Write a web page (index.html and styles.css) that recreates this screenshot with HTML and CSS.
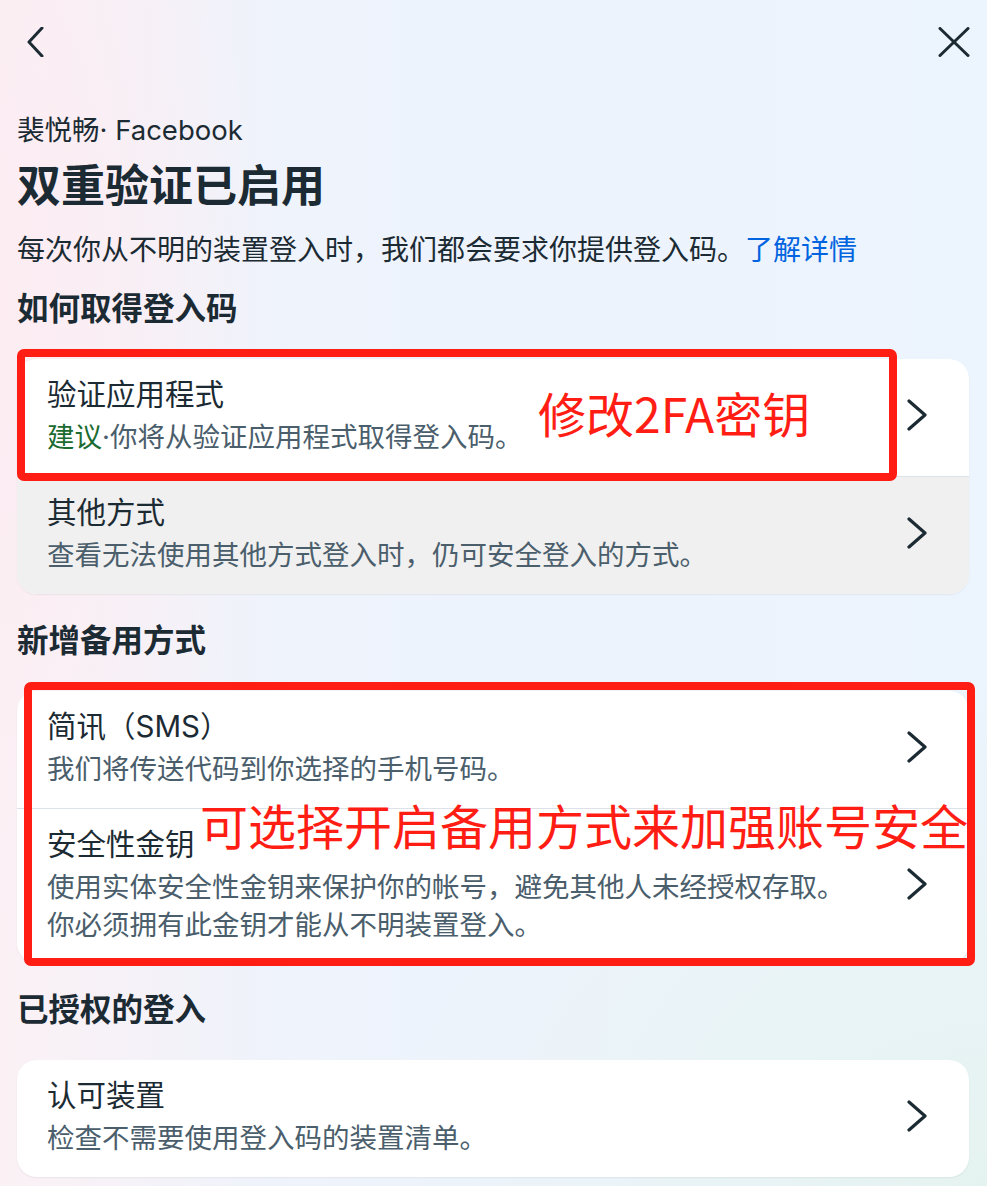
FILE: index.html
```html
<!DOCTYPE html>
<html lang="zh-CN">
<head>
  <meta charset="UTF-8">
  <title>双重验证</title>
  <link rel="stylesheet" href="styles.css">
</head>
<body>
  <div class="page">
    <div class="topbar">
      <svg class="icon-back" width="30" height="30" viewBox="0 0 30 30">
        <polyline points="20,1 7,15 20,29" fill="none" stroke="#1c2b33" stroke-width="3" stroke-linecap="round" stroke-linejoin="round"/>
      </svg>
      <svg class="icon-close" width="32" height="30" viewBox="0 0 32 30">
        <line x1="2" y1="1.5" x2="30" y2="28.5" stroke="#1c2b33" stroke-width="3" stroke-linecap="round"/>
        <line x1="30" y1="1.5" x2="2" y2="28.5" stroke="#1c2b33" stroke-width="3" stroke-linecap="round"/>
      </svg>
    </div>

    <div class="account">裴悦畅· Facebook</div>
    <h1 class="title">双重验证已启用</h1>
    <p class="desc">每次你从不明的装置登入时，我们都会要求你提供登入码。<a href="#">了解详情</a></p>

    <h2 class="section">如何取得登入码</h2>
    <div class="card-wrap">
      <div class="card">
        <div class="row">
          <div class="row-text">
            <div class="row-title">验证应用程式</div>
            <div class="row-sub"><span class="green">建议</span>·你将从验证应用程式取得登入码。</div>
          </div>
          <svg class="chev" width="22" height="32" viewBox="0 0 22 32"><polyline points="3,2 19,16 3,30" fill="none" stroke="#1c2b33" stroke-width="3.2" stroke-linecap="round" stroke-linejoin="round"/></svg>
        </div>
        <div class="row row-gray">
          <div class="row-text">
            <div class="row-title">其他方式</div>
            <div class="row-sub">查看无法使用其他方式登入时，仍可安全登入的方式。</div>
          </div>
          <svg class="chev" width="22" height="32" viewBox="0 0 22 32"><polyline points="3,2 19,16 3,30" fill="none" stroke="#1c2b33" stroke-width="3.2" stroke-linecap="round" stroke-linejoin="round"/></svg>
        </div>
      </div>
      <div class="mark mark-one"></div>
      <div class="note note-one">修改2FA密钥</div>
    </div>

    <h2 class="section">新增备用方式</h2>
    <div class="card-wrap">
      <div class="card">
        <div class="row">
          <div class="row-text">
            <div class="row-title">简讯（SMS）</div>
            <div class="row-sub">我们将传送代码到你选择的手机号码。</div>
          </div>
          <svg class="chev" width="22" height="32" viewBox="0 0 22 32"><polyline points="3,2 19,16 3,30" fill="none" stroke="#1c2b33" stroke-width="3.2" stroke-linecap="round" stroke-linejoin="round"/></svg>
        </div>
        <div class="row row-tall">
          <div class="row-text">
            <div class="row-title">安全性金钥</div>
            <div class="row-sub">使用实体安全性金钥来保护你的帐号，避免其他人未经授权存取。<br>你必须拥有此金钥才能从不明装置登入。</div>
          </div>
          <svg class="chev" width="22" height="32" viewBox="0 0 22 32"><polyline points="3,2 19,16 3,30" fill="none" stroke="#1c2b33" stroke-width="3.2" stroke-linecap="round" stroke-linejoin="round"/></svg>
        </div>
      </div>
      <div class="mark mark-two"></div>
      <div class="note note-two">可选择开启备用方式来加强账号安全</div>
    </div>

    <h2 class="section">已授权的登入</h2>
    <div class="card-wrap">
      <div class="card">
        <div class="row">
          <div class="row-text">
            <div class="row-title">认可装置</div>
            <div class="row-sub">检查不需要使用登入码的装置清单。</div>
          </div>
          <svg class="chev" width="22" height="32" viewBox="0 0 22 32"><polyline points="3,2 19,16 3,30" fill="none" stroke="#1c2b33" stroke-width="3.2" stroke-linecap="round" stroke-linejoin="round"/></svg>
        </div>
      </div>
    </div>
  </div>
</body>
</html>
```

FILE: styles.css
```css
html,
body {
  margin: 0;
  padding: 0;
}

body {
  width: 987px;
  height: 1186px;
  overflow: hidden;
  font-family: "Inter", "Noto Sans CJK SC", sans-serif;
  color: #1c2b33;
  background:
    radial-gradient(ellipse 260px 700px at 0 300px, rgba(252, 236, 242, 0.9), rgba(252, 236, 242, 0) 100%),
    radial-gradient(ellipse 600px 500px at 987px 1186px, rgba(229, 243, 240, 1), rgba(229, 243, 240, 0) 100%),
    linear-gradient(90deg, #fbf1f5 0, #eef3fc 30%, #ecf4fd 100%);
}

.page {
  padding: 0 18px 0 17px;
}

.topbar {
  display: flex;
  justify-content: space-between;
  align-items: center;
  padding-top: 27px;
  height: 30px;
}

.icon-back {
  margin-left: 5px;
}

.icon-close {
  margin-right: -1px;
}

.account {
  margin-top: 55px;
  font-size: 27.5px;
  line-height: 36px;
  color: #1c2b33;
}

.title {
  margin: 10px 0 0;
  font-size: 44px;
  line-height: 56px;
  font-weight: 700;
}

.desc {
  margin: 16px 0 0;
  font-size: 28px;
  line-height: 40px;
}

.desc a {
  color: #0064e0;
  text-decoration: none;
}

.section {
  margin: 27px 0 30px;
  font-size: 31.5px;
  line-height: 40px;
  font-weight: 700;
}

.desc + .section {
  margin-top: 19px;
}

.card-wrap {
  position: relative;
}

.card {
  background: #fff;
  border-radius: 20px;
  overflow: hidden;
  box-shadow: 0 1px 2px rgba(0, 0, 0, 0.06);
}

.row {
  display: flex;
  align-items: center;
  padding: 15px 41px 20px 30px;
}

.row + .row {
  border-top: 1px solid #dde2e8;
}

.row-gray {
  background: #f0f0f0;
}

.row-tall {
  padding-bottom: 19px;
}

.row-text {
  flex: 1;
}

.row-title {
  font-size: 29.5px;
  line-height: 40px;
  color: #1c2b33;
}

.row-sub {
  margin-top: 4px;
  font-size: 27.5px;
  line-height: 38px;
  color: #4b5e6c;
}

.green {
  color: #1b6b31;
}

.chev {
  flex: none;
}

.mark {
  position: absolute;
  border: 8px solid #ff1d14;
  border-radius: 7px;
  box-sizing: border-box;
}

.mark-one {
  left: 0;
  top: -10px;
  width: 880px;
  height: 132px;
}

.mark-two {
  left: 7px;
  top: -9px;
  width: 951px;
  height: 284px;
}

.note {
  position: absolute;
  color: #ff1d14;
  font-family: "Noto Sans CJK SC", sans-serif;
  font-size: 48px;
  line-height: 48px;
  white-space: nowrap;
}

.note-one {
  left: 521px;
  top: 29px;
}

.note-two {
  left: 183px;
  top: 109px;
}
```
